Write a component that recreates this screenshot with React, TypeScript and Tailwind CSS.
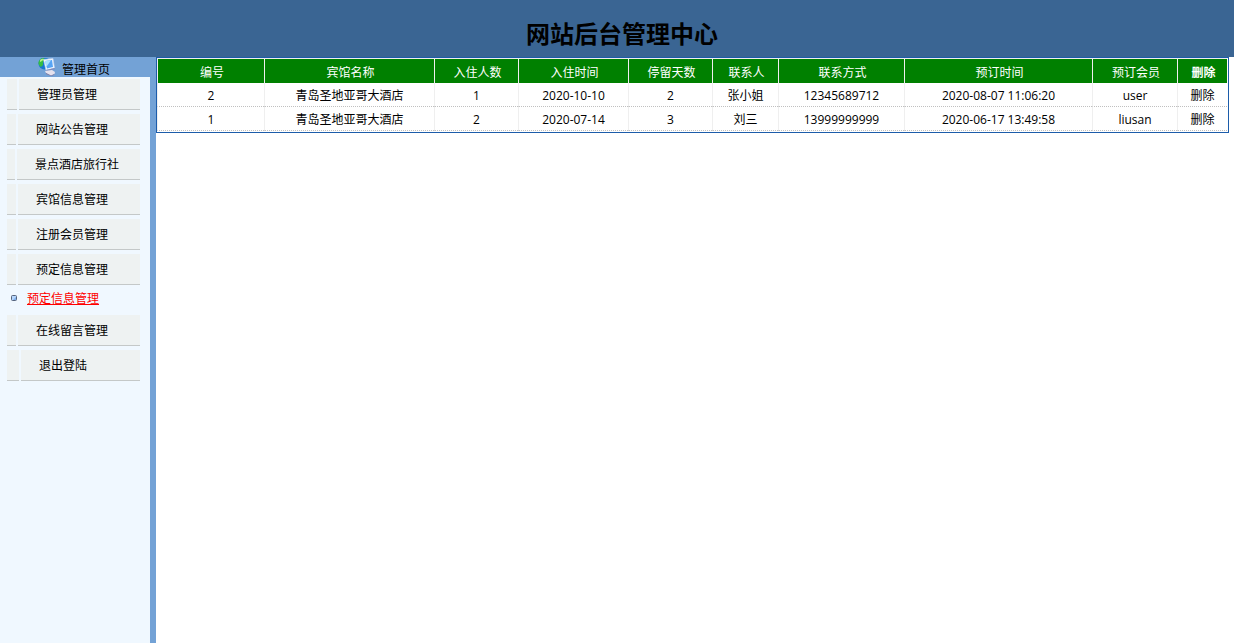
import { clsx } from 'clsx';

const menuItems = [
  { label: '管理员管理', tab: 'w-[10px]' },
  { label: '网站公告管理', tab: 'w-[9px]' },
  { label: '景点酒店旅行社', tab: 'w-[8px]' },
  { label: '宾馆信息管理', tab: 'w-[9px]' },
  { label: '注册会员管理', tab: 'w-[9px]' },
  { label: '预定信息管理', tab: 'w-[9px]', children: ['预定信息管理'] },
  { label: '在线留言管理', tab: 'w-[9px]' },
  { label: '退出登陆', tab: 'w-[12px]' },
];

const columns = [
  { title: '编号', width: 'w-[107px]' },
  { title: '宾馆名称', width: 'w-[170px]' },
  { title: '入住人数', width: 'w-[84px]' },
  { title: '入住时间', width: 'w-[110px]' },
  { title: '停留天数', width: 'w-[84px]' },
  { title: '联系人', width: 'w-[66px]' },
  { title: '联系方式', width: 'w-[126px]' },
  { title: '预订时间', width: 'w-[188px]' },
  { title: '预订会员', width: 'w-[85px]' },
  { title: '删除', width: 'w-[50px]' },
];

const bookings = [
  ['2', '青岛圣地亚哥大酒店', '1', '2020-10-10', '2', '张小姐', '12345689712', '2020-08-07 11:06:20', 'user'],
  ['1', '青岛圣地亚哥大酒店', '2', '2020-07-14', '3', '刘三', '13999999999', '2020-06-17 13:49:58', 'liusan'],
];

const cellClass =
  'border-b border-l border-[#efefef] border-b-[#c0c0c0] p-0 pt-0.5 [border-bottom-style:dotted]';

const ComputerIcon = () => (
  <svg width="18" height="18" viewBox="0 0 18 18" aria-hidden="true">
    <circle cx="6.5" cy="5.5" r="6" fill="#1677d2" />
    <path d="M0.5 4 Q2 0 6 0 L7 2 L5 4 L5 7 L3 9 Q0 7 0.5 4" fill="#35bd45" />
    <path d="M2 2 Q4 0 6 1 L4 3 L2 4 Z" fill="#b4f080" />
    <path d="M5.5 1.5 L15 0.5 L16.5 10 L8 12 Z" fill="#f4f8ff" stroke="#c5d5f0" strokeWidth="0.6" />
    <path d="M7 3 L14 2 L15 9 L9 10.5 Z" fill="#57a4f5" />
    <path d="M7 3 L13 2.2 L9 8 L8 8 Z" fill="#a9e2ff" />
    <path d="M8 12 L16.5 10 L17 11 L9 13 Z" fill="#8289b8" />
    <path d="M7 13 L14 12 L17 14 L16.5 16 L13 17.5 L8 15 Z" fill="#e5e2ee" />
    <path d="M8 15 L13 17.5 L16.5 16 L16 17 L13 18 L8 16 Z" fill="#87779c" />
  </svg>
);

const Sidebar = () => (
  <aside className="w-[156px] shrink-0 border-r-6 border-[#73a2d6] bg-[#f0f8ff]">
    <div className="flex h-5 items-center gap-1.5 bg-[#73a2d6] pl-[38px]">
      <ComputerIcon />
      <a href="#home" className="pt-1.5">管理首页</a>
    </div>
    <nav className="flex flex-col gap-1 pt-[2px] pr-[10px] pl-[7px]">
      {menuItems.map((item) => (
        <div key={item.label}>
          <div className="flex h-[31px] gap-[2px]">
            <span className={clsx('border-b border-[#c4c8c8] bg-[#eef2f2]', item.tab)} />
            <a
              href="#menu"
              className="flex flex-1 items-center border-b border-[#c4c8c8] bg-[#eef2f2] pt-0.5 pl-[18px]"
            >
              {item.label}
            </a>
          </div>
          {item.children?.map((child) => (
            <a key={child} href="#bookings" className="flex h-[26px] items-center gap-[10px] pl-1 text-[#ff0000]">
              <svg width="6" height="6" viewBox="0 0 6 6" aria-hidden="true">
                <rect x="0.5" y="0.5" width="5" height="5" rx="1" fill="#b5d5fb" stroke="#56647d" />
                <path d="M5 2 V5 H2 Z" fill="#7fb0ee" />
              </svg>
              <span className="pt-0.5 underline">{child}</span>
            </a>
          ))}
        </div>
      ))}
    </nav>
  </aside>
);

const BookingTable = () => (
  <div className="border border-[#1c5caa] pr-px pb-px">
    <table className="w-full table-fixed border-separate border-spacing-0 text-center">
      <thead>
        <tr className="h-[25px] bg-[#008000] text-white">
          {columns.map((column) => (
            <th
              key={column.title}
              className={clsx('border-t border-l border-[#efefef] p-0 pt-1 pl-0.5 font-normal last:font-bold', column.width)}
            >
              {column.title}
            </th>
          ))}
        </tr>
      </thead>
      <tbody>
        {bookings.map((row) => (
          <tr key={row[0]} className="h-6">
            {row.map((value, i) => (
              <td key={i} className={cellClass}>{value}</td>
            ))}
            <td className={cellClass}>
              <a href="#delete">删除</a>
            </td>
          </tr>
        ))}
      </tbody>
    </table>
  </div>
);

export default function App() {
  return (
    <div className="flex min-h-screen flex-col bg-white font-['Open_Sans','Noto_Sans_CJK_SC',sans-serif] text-[12px] leading-4 text-black">
      <header className="flex h-[57px] items-center justify-center bg-[#3a6593] pt-2.5 pl-[10px]">
        <h1 className="text-2xl font-bold">网站后台管理中心</h1>
      </header>
      <div className="flex flex-1">
        <Sidebar />
        <main className="min-w-0 flex-1 pr-[5px]">
          <BookingTable />
        </main>
      </div>
    </div>
  );
}
